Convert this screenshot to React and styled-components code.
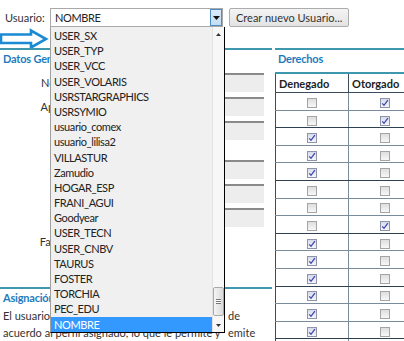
import React from 'react';
import styled, { createGlobalStyle } from 'styled-components';

const GlobalStyle = createGlobalStyle`
  body {
    margin: 0;
    background: #fff;
    font-family: Lato, "Liberation Sans", sans-serif;
    font-size: 11px;
    color: #333;
  }
`;

const usuarios = [
  'USER_SX', 'USER_TYP', 'USER_VCC', 'USER_VOLARIS', 'USRSTARGRAPHICS', 'USRSYMIO',
  'usuario_comex', 'usuario_lilisa2', 'VILLASTUR', 'Zamudio', 'HOGAR_ESP', 'FRANI_AGUI',
  'Goodyear', 'USER_TECN', 'USER_CNBV', 'TAURUS', 'FOSTER', 'TORCHIA', 'PEC_EDU', 'NOMBRE',
];

// [denegado, otorgado]
const derechos = [
  [false, true], [false, true], [true, false], [true, false], [true, false],
  [false, false], [false, false], [false, true], [true, false], [true, false],
  [true, false], [true, false], [true, false], [true, false], [true, false],
];

const campos = [
  { label: 'Nombre:', gap: 0 },
  { label: 'Apellido:', gap: 0 },
  { label: 'Login:', gap: 0 },
  { label: 'Clave:', gap: 15 },
  { label: 'Email:', gap: 0 },
  { label: 'Área:', gap: 0 },
  { label: 'Facultad:', gap: 0, short: true },
];

const App = () => {
  return (
    <Page>
      <GlobalStyle />
      <TopBar>
        <TopLabel>Usuario:</TopLabel>
        <Select>
          <SelectValue>NOMBRE</SelectValue>
          <SelectButton>
            <svg width="7" height="4" viewBox="0 0 7 4"><path d="M0 0h7L3.5 4z" fill="#111" /></svg>
          </SelectButton>
        </Select>
        <Button>Crear nuevo Usuario...</Button>
      </TopBar>

      <ArrowRow>
        <svg width="50" height="20" viewBox="0 0 50 20">
          <path d="M1 6.5h30V2.5l15 8.5-15 8.5v-4.5H1z" fill="#fff" stroke="#1a8ad4" strokeWidth="2.6" />
        </svg>
      </ArrowRow>

      <Columns>
        <Left>
          <SectionTitle>Datos Generales</SectionTitle>
          <Form>
            {campos.map((c) => (
              <Field key={c.label} $gap={c.gap}>
                <FieldLabel>{c.label}</FieldLabel>
                <Input $short={c.short} />
              </Field>
            ))}
          </Form>
          <SectionTitle $mt={31}>Asignación de derechos</SectionTitle>
          <Text>
            <Line><Clip>El usuario seleccionado tendrá los permisos</Clip><span>de</span></Line>
            <Line><Clip>acuerdo al perfil asignado, lo que le permite y</Clip><span>emite</span></Line>
          </Text>
        </Left>

        <Right>
          <SectionTitle>Derechos</SectionTitle>
          <Table>
            <thead>
              <tr>
                <Th>Denegado</Th>
                <Th>Otorgado</Th>
              </tr>
            </thead>
            <tbody>
              {derechos.map(([den, oto], i) => (
                <tr key={i}>
                  <Td $dark={i % 3 === 1}><Check $checked={den}>{den && <Tick />}</Check></Td>
                  <Td $dark={i % 3 === 1}><Check $checked={oto}>{oto && <Tick />}</Check></Td>
                </tr>
              ))}
            </tbody>
          </Table>
        </Right>
      </Columns>

      <DropList>
        <Items>
          {usuarios.map((u) => (
            <Item key={u} $selected={u === 'NOMBRE'}>{u}</Item>
          ))}
        </Items>
        <ScrollBar>
          <ScrollArrow>
            <svg width="5" height="3" viewBox="0 0 5 3"><path d="M0 3h5L2.5 0z" fill="#333" /></svg>
          </ScrollArrow>
          <ScrollTrack />
          <Thumb>
            <Grip />
          </Thumb>
          <ScrollArrow>
            <svg width="5" height="3" viewBox="0 0 5 3"><path d="M0 0h5L2.5 3z" fill="#333" /></svg>
          </ScrollArrow>
        </ScrollBar>
      </DropList>
    </Page>
  );
};

const Tick = () => (
  <svg width="8" height="8" viewBox="0 0 8 8">
    <path d="M1.2 4.4l1.8 1.9L6.9 1.2" fill="none" stroke="#4446b0" strokeWidth="1.3" />
  </svg>
);

const Page = styled.div`
  position: relative;
  width: 404px;
  height: 341px;
  overflow: hidden;
`;

const TopBar = styled.div`
  display: flex;
  align-items: center;
  height: 19px;
  padding: 8px 0 0 5px;
`;

const TopLabel = styled.span`
  width: 45px;
  color: #333;
`;

const Select = styled.div`
  display: flex;
  align-items: center;
  box-sizing: border-box;
  width: 173px;
  height: 19px;
  border: 1px solid #a9a9a9;
  background: #fff;
`;

const SelectValue = styled.span`
  flex: 1;
  padding-left: 4px;
  letter-spacing: -0.4px;
  color: #222;
`;

const SelectButton = styled.span`
  display: flex;
  align-items: center;
  justify-content: center;
  box-sizing: border-box;
  width: 12px;
  height: 17px;
  border: 1px solid #4f8cc4;
  background: linear-gradient(#dcebfa, #c3dcf4);
`;

const Button = styled.button`
  box-sizing: border-box;
  height: 19px;
  margin-left: 6px;
  padding: 0 6px;
  border: 1px solid #acacac;
  border-radius: 2px;
  background: linear-gradient(#f4f4f4, #e3e3e3);
  font-family: inherit;
  font-size: 11px;
  color: #333;
`;

const ArrowRow = styled.div`
  display: flex;
  height: 21px;
  padding-top: 1px;
  box-sizing: border-box;
`;

const Columns = styled.div`
  display: flex;
  align-items: flex-start;
`;

const Left = styled.div`
  width: 272px;
  flex: none;
`;

const Right = styled.div`
  flex: none;
  width: 150px;
  margin-left: 3px;
`;

const SectionTitle = styled.div`
  margin-top: ${(p) => p.$mt || 0}px;
  padding: 2px 0 0 3px;
  border-top: 2px solid #3f97ad;
  line-height: 14px;
  font-weight: 700;
  letter-spacing: -0.2px;
  color: #1d7bbd;
`;

const Form = styled.div`
  display: flex;
  flex-direction: column;
  padding-top: 7px;
`;

const Field = styled.div`
  display: flex;
  align-items: center;
  height: 19px;
  margin-top: ${(p) => p.$gap}px;
  margin-bottom: 5px;
`;

const FieldLabel = styled.span`
  width: 83px;
  padding-right: 5px;
  text-align: right;
  color: #333;
`;

const Input = styled.div`
  box-sizing: border-box;
  width: ${(p) => (p.$short ? 90 : 176)}px;
  height: 19px;
  border-top: 2px solid #8a8a8a;
  background: #ededed;
`;

const Text = styled.div`
  padding: 2px 0 0 3px;
  line-height: 17px;
  color: #333;
`;

const Line = styled.div`
  display: flex;
`;

const Clip = styled.span`
  flex: 0 0 225px;
  overflow: hidden;
  white-space: nowrap;
`;

const Table = styled.table`
  margin-top: 6px;
  border-collapse: collapse;
  border-top: 2px solid #3f97ad;
  table-layout: fixed;
  width: 144px;
`;

const Th = styled.th`
  width: 69px;
  height: 18px;
  padding: 0 0 0 3px;
  border: 1px solid #3b4d5c;
  text-align: left;
  font-weight: 700;
  color: #222;
`;

const Td = styled.td`
  height: 16.6px;
  padding: 0;
  border: 1px solid #7a8c9a;
  border-bottom-color: ${(p) => (p.$dark ? '#2f4150' : '#7a8c9a')};
  border-left-color: #3b4d5c;
  text-align: center;
  vertical-align: middle;
`;

const Check = styled.span`
  display: inline-flex;
  align-items: center;
  justify-content: center;
  box-sizing: border-box;
  width: 10px;
  height: 10px;
  vertical-align: middle;
  border: 1px solid ${(p) => (p.$checked ? '#8e94a8' : '#a4a4a4')};
  background: ${(p) => (p.$checked ? 'linear-gradient(#d6dcea, #f4f6fb)' : 'linear-gradient(#dedede, #f7f7f7)')};
`;

const DropList = styled.div`
  position: absolute;
  left: 50px;
  top: 27px;
  display: flex;
  box-sizing: border-box;
  width: 175px;
  height: 306px;
  border-left: 1px solid #a0a0a0;
  border-right: 1px solid #000;
  border-bottom: 1px solid #000;
  background: #f0f0f0;
`;

const Items = styled.div`
  flex: 1;
  padding-top: 1px;
`;

const Item = styled.div`
  height: 15.2px;
  padding-left: 3px;
  line-height: 15.2px;
  white-space: nowrap;
  letter-spacing: -0.4px;
  color: ${(p) => (p.$selected ? '#fff' : '#222')};
  background: ${(p) => (p.$selected ? '#3399ff' : 'transparent')};
`;

const ScrollBar = styled.div`
  display: flex;
  flex-direction: column;
  width: 11px;
  border-left: 1px solid #e2e2e2;
  background: #f7f7f7;
`;

const ScrollArrow = styled.div`
  display: flex;
  align-items: center;
  justify-content: center;
  height: 14px;
`;

const ScrollTrack = styled.div`
  flex: 1;
`;

const Thumb = styled.div`
  display: flex;
  align-items: center;
  justify-content: center;
  box-sizing: border-box;
  height: 29px;
  margin-bottom: 2px;
  border: 1px solid #a9a9a9;
  border-radius: 2px;
  background: linear-gradient(90deg, #f4f4f4, #dadada);
`;

const Grip = styled.div`
  width: 5px;
  height: 5px;
  border-top: 1px solid #777;
  border-bottom: 1px solid #777;
  background: linear-gradient(#fff 0 1px, #777 1px 2px, #fff 2px);
  box-sizing: border-box;
`;

export default App;
